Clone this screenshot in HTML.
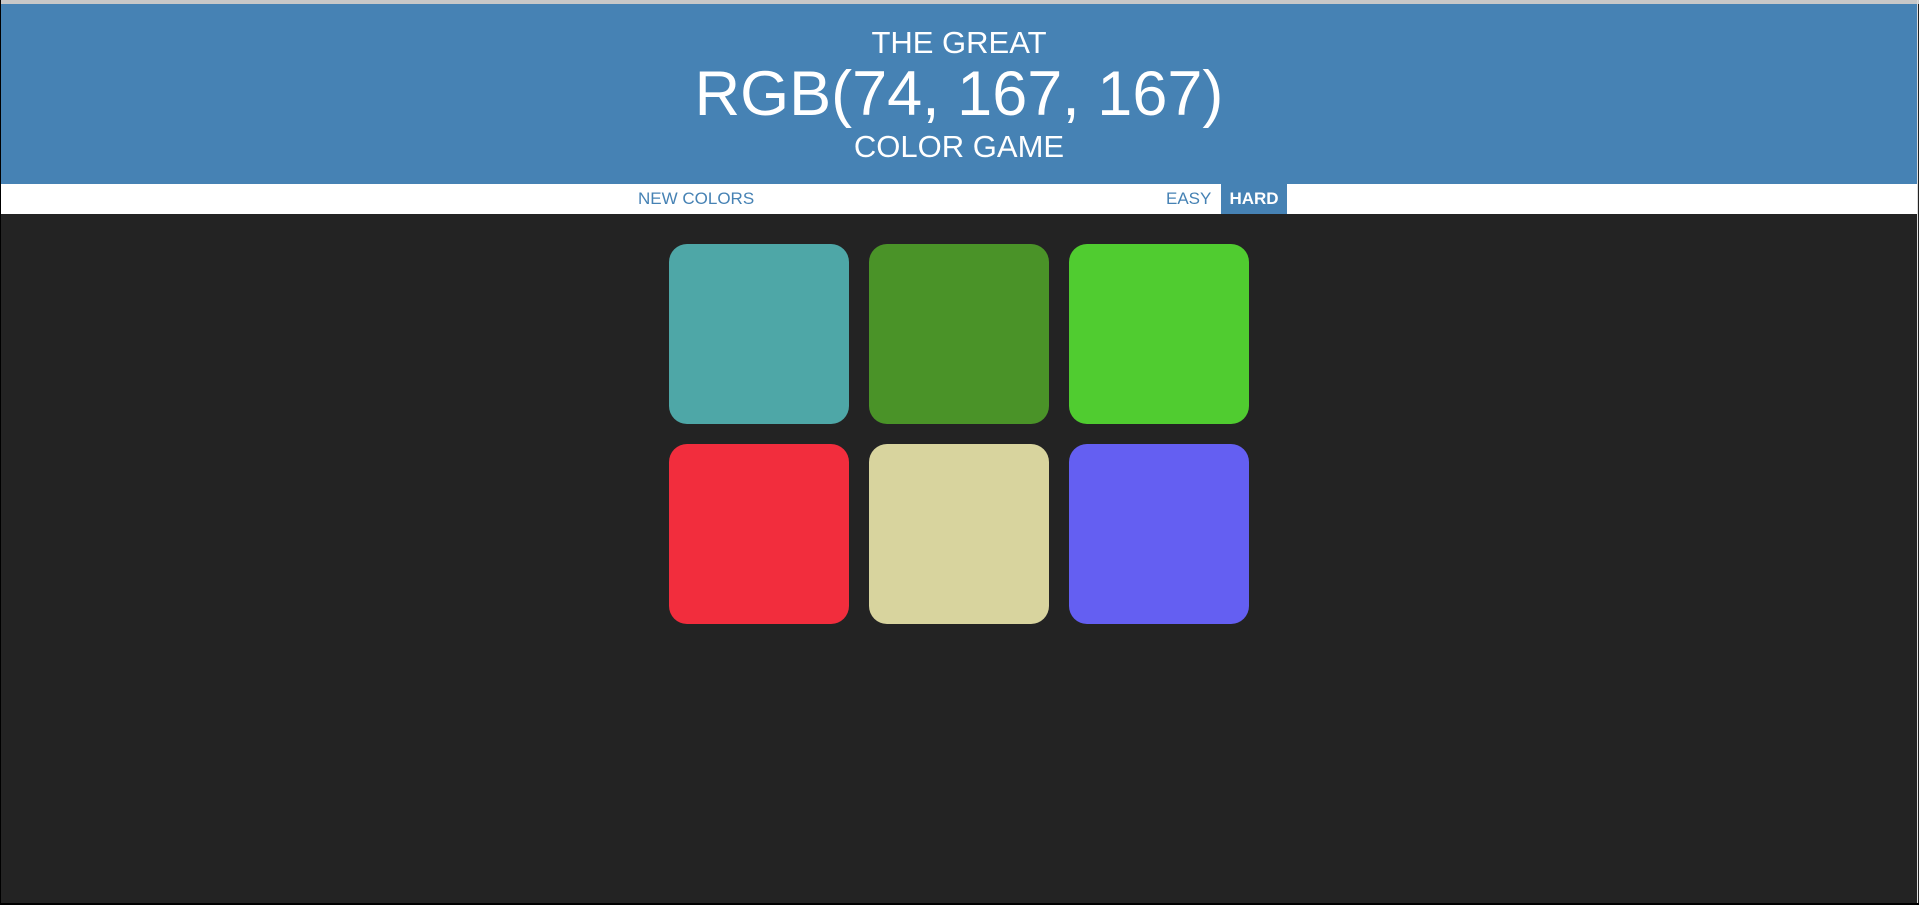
<!DOCTYPE html>
<html><head><style>
html,body{margin:0;padding:0;width:1919px;height:905px;overflow:hidden;background:#232323;font-family:"Liberation Sans",sans-serif;}
.top{position:absolute;left:0;top:0;width:1919px;height:4px;background:#c8c8c8;}
.h{position:absolute;left:1px;top:4px;width:1916px;height:180px;background:#4682b4;color:#fff;text-align:center;}
.h div{position:absolute;left:0;right:0;}
.nav{position:absolute;left:1px;top:184px;width:1916px;height:30px;background:#fff;color:#4682b4;font-size:17px;}
.nav span{position:absolute;top:0;line-height:30px;}
.sq{position:absolute;width:180px;height:180px;border-radius:18px;}
.edge{position:absolute;top:0;width:1px;height:905px;background:#000;}
</style></head><body>
<div class="top"></div>
<div class="h">
<div style="top:21px;font-size:31px;line-height:36px;">THE GREAT</div>
<div style="top:54px;font-size:63px;line-height:72px;">RGB(74, 167, 167)</div>
<div style="top:125px;font-size:31px;line-height:36px;">COLOR GAME</div>
</div>
<div class="nav">
<span style="left:637px;">NEW COLORS</span>
<span style="left:1165px;">EASY</span>
<span style="left:1220px;width:66px;height:30px;background:#4682b4;color:#fff;font-weight:bold;text-align:center;">HARD</span>
</div>
<div class="sq" style="left:669px;top:244px;background:#4ea7a7"></div>
<div class="sq" style="left:869px;top:244px;background:#4a9328"></div>
<div class="sq" style="left:1069px;top:244px;background:#50cc30"></div>
<div class="sq" style="left:669px;top:444px;background:#f22d3d"></div>
<div class="sq" style="left:869px;top:444px;background:#d8d49e"></div>
<div class="sq" style="left:1069px;top:444px;background:#645ff2"></div>
<div class="edge" style="left:0"></div>
<div class="edge" style="left:1917px;background:#ddd"></div>
<div style="position:absolute;left:0;top:903px;width:1919px;height:2px;background:#000"></div>
</body></html>
